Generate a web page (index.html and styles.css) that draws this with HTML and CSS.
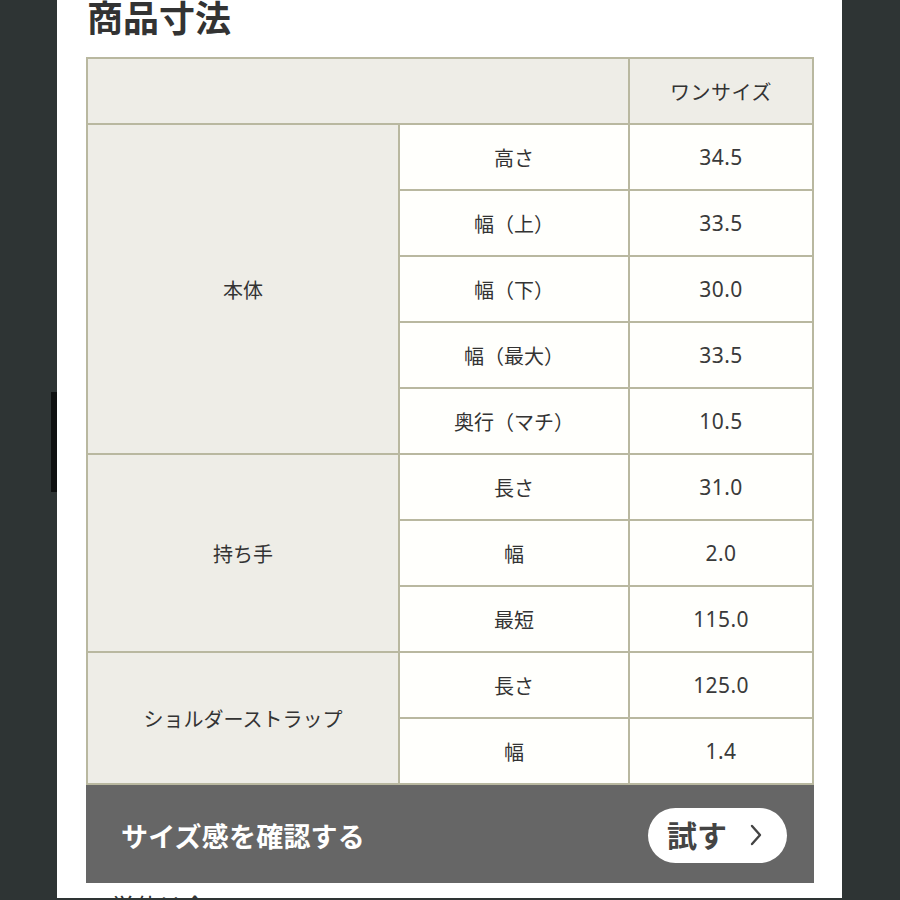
FILE: index.html
```html
<!DOCTYPE html>
<html lang="ja">
<head>
<meta charset="utf-8">
<title>商品寸法</title>
<link rel="stylesheet" href="styles.css">
</head>
<body>
<div class="side-handle"></div>
<main class="panel">
  <h2 class="title">商品寸法</h2>
  <div class="size-table">
    <div class="cell head blank"></div>
    <div class="cell head">ワンサイズ</div>

    <div class="cell group g5">本体</div>
    <div class="cell item">高さ</div><div class="cell val">34.5</div>
    <div class="cell item">幅（上）</div><div class="cell val">33.5</div>
    <div class="cell item">幅（下）</div><div class="cell val">30.0</div>
    <div class="cell item">幅（最大）</div><div class="cell val">33.5</div>
    <div class="cell item">奥行（マチ）</div><div class="cell val">10.5</div>

    <div class="cell group g3">持ち手</div>
    <div class="cell item">長さ</div><div class="cell val">31.0</div>
    <div class="cell item">幅</div><div class="cell val">2.0</div>
    <div class="cell item">最短</div><div class="cell val">115.0</div>

    <div class="cell group g2">ショルダーストラップ</div>
    <div class="cell item">長さ</div><div class="cell val">125.0</div>
    <div class="cell item">幅</div><div class="cell val">1.4</div>
  </div>
  <div class="fit-bar">
    <span class="fit-label">サイズ感を確認する</span>
    <button class="try-btn" type="button">
      <span>試す</span>
      <svg class="chev" width="14" height="24" viewBox="0 0 14 24"><path d="M3 3 L11 12 L3 21" fill="none" stroke="#444" stroke-width="2.4" stroke-linecap="round" stroke-linejoin="round"/></svg>
    </button>
  </div>
  <p class="note">※単位は全て</p>
</main>
<div class="bottom-edge"></div>
</body>
</html>
```
FILE: styles.css
```css
html, body {
  margin: 0;
  padding: 0;
  height: 100%;
  overflow: hidden;
}
body {
  background: #2e3434;
  font-family: "Noto Sans CJK JP", "Noto Sans", sans-serif;
  color: #333;
  position: relative;
}
.panel {
  margin-left: 57px;
  width: 785px;
  height: 900px;
  background: #fff;
  box-sizing: border-box;
  padding-left: 29px;
}
.title {
  margin: 0;
  position: relative;
  top: -2px;
  font-size: 36px;
  line-height: 36px;
  font-weight: 700;
  color: #333;
  height: 57px;
  padding-left: 1px;
}
.size-table {
  width: 728px;
  box-sizing: border-box;
  display: grid;
  grid-template-columns: 310px 228px 182px;
  grid-auto-rows: 64px;
  gap: 2px;
  padding: 2px;
  background: #b9b8a0;
}
.cell {
  display: flex;
  align-items: center;
  justify-content: center;
  font-size: 20px;
  color: #333;
  background: #fffffc;
}
.head { background: #eeede7; letter-spacing: 0.5px; }
.blank { grid-column: span 2; }
.group { background: #eeede7; }
.g5 { grid-row: span 5; }
.g3 { grid-row: span 3; }
.g2 { grid-row: span 2; }
.val {
  font-family: "Noto Sans", "Noto Sans CJK JP", sans-serif;
  font-size: 21px;
  letter-spacing: 0.4px;
  color: #3a3a3a;
}
.fit-bar {
  width: 728px;
  height: 98px;
  box-sizing: border-box;
  background: #666;
  display: flex;
  align-items: center;
  justify-content: space-between;
  padding: 0 27px 0 35px;
}
.fit-label {
  color: #fff;
  font-size: 27px;
  font-weight: 700;
  letter-spacing: 0.2px;
  margin-top: 2px;
}
.try-btn {
  width: 139px;
  height: 55px;
  border: none;
  border-radius: 28px;
  background: #fff;
  display: flex;
  align-items: center;
  padding: 0 0 0 19px;
  font-family: "Noto Sans CJK JP", sans-serif;
  font-size: 30px;
  font-weight: 700;
  color: #444;
  gap: 22px;
  margin-top: 2px;
}
.try-btn span { line-height: 1; margin-top: -2px; }
.chev { display: block; }
.note {
  margin: 8px 0 0 1px;
  font-size: 24px;
  line-height: 30px;
  color: #333;
}
.side-handle {
  position: absolute;
  left: 51px;
  top: 392px;
  width: 6px;
  height: 100px;
  background: #0e1010;
}
.bottom-edge {
  position: absolute;
  left: 0;
  right: 0;
  bottom: 0;
  height: 2px;
  background: #2e3434;
}
```
